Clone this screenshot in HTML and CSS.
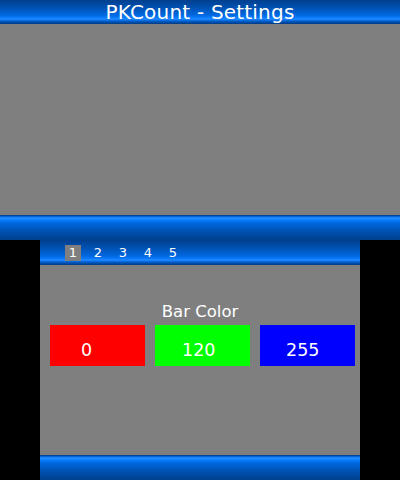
FILE: index.html
```html
<!DOCTYPE html>
<html>
<head>
<meta charset="utf-8">
<link rel="stylesheet" href="styles.css">
</head>
<body>
<div class="top-screen">
  <div class="top-header">PKCount - Settings</div>
  <div class="top-content"></div>
  <div class="top-bar"></div>
</div>
<div class="bottom-screen">
  <div class="tabs">
    <span class="tab active">1</span>
    <span class="tab">2</span>
    <span class="tab">3</span>
    <span class="tab">4</span>
    <span class="tab">5</span>
  </div>
  <div class="panel">
    <div class="label">Bar Color</div>
    <div class="boxes">
      <div class="box red">0</div>
      <div class="box green">120</div>
      <div class="box blue">255</div>
    </div>
  </div>
  <div class="footer"></div>
</div>
</body>
</html>
```
FILE: styles.css
```css
html, body {
  margin: 0;
  padding: 0;
  background: #000;
  width: 400px;
  height: 480px;
  overflow: hidden;
  font-family: "DejaVu Sans", "Liberation Sans", sans-serif;
  color: #fff;
}

.top-screen {
  width: 400px;
  height: 240px;
  display: flex;
  flex-direction: column;
}

.top-header {
  height: 24px;
  flex: none;
  background: linear-gradient(to bottom,
    #003f8e 0px, #0052b4 8px, #0068e0 15px, #0a7cff 18px, #2a8eff 19px,
    #0a74f0 20px, #0050b0 22px, #003c84 24px);
  font-size: 20px;
  line-height: 24px;
  text-align: center;
  letter-spacing: 0.2px;
}

.top-content {
  flex: 1;
  background: #7f7f7f;
}

.top-bar, .footer {
  height: 25px;
  flex: none;
  background: linear-gradient(to bottom,
    #003c84 0px, #0050b0 1px, #0a78f8 2px, #2a8eff 3px, #0a7cff 5px,
    #0068e0 8px, #0052b4 16px, #00408e 25px);
}

.bottom-screen {
  width: 320px;
  height: 240px;
  margin: 0 auto;
  display: flex;
  flex-direction: column;
}

.tabs {
  height: 25px;
  flex: none;
  display: flex;
  align-items: flex-start;
  padding: 5px 0 0 25px;
  box-sizing: border-box;
  gap: 9px;
  background: linear-gradient(to bottom,
    #003f8e 0px, #0052b4 8px, #0068e0 16px, #0a7cff 19px, #2a8eff 20px,
    #0a74f0 21px, #0050b0 23px, #003c84 25px);
}

.tab {
  width: 16px;
  height: 16px;
  font-size: 13px;
  line-height: 16px;
  text-align: center;
}

.tab.active {
  background: #7f7f7f;
}

.panel {
  flex: 1;
  background: #7f7f7f;
  display: flex;
  flex-direction: column;
  align-items: center;
  padding-top: 37px;
}

.label {
  font-size: 16.5px;
  line-height: 20px;
  text-align: center;
}

.boxes {
  display: flex;
  gap: 10px;
  margin-top: 3px;
  align-self: flex-start;
  padding-left: 10px;
}

.box {
  width: 95px;
  height: 41px;
  font-size: 17.5px;
  line-height: 20px;
  text-align: left;
  box-sizing: border-box;
  padding-top: 15px;
}

.red { background: #ff0000; padding-left: 31px; }
.green { background: #00ff00; padding-left: 27px; }
.blue { background: #0000ff; padding-left: 26px; }
```
